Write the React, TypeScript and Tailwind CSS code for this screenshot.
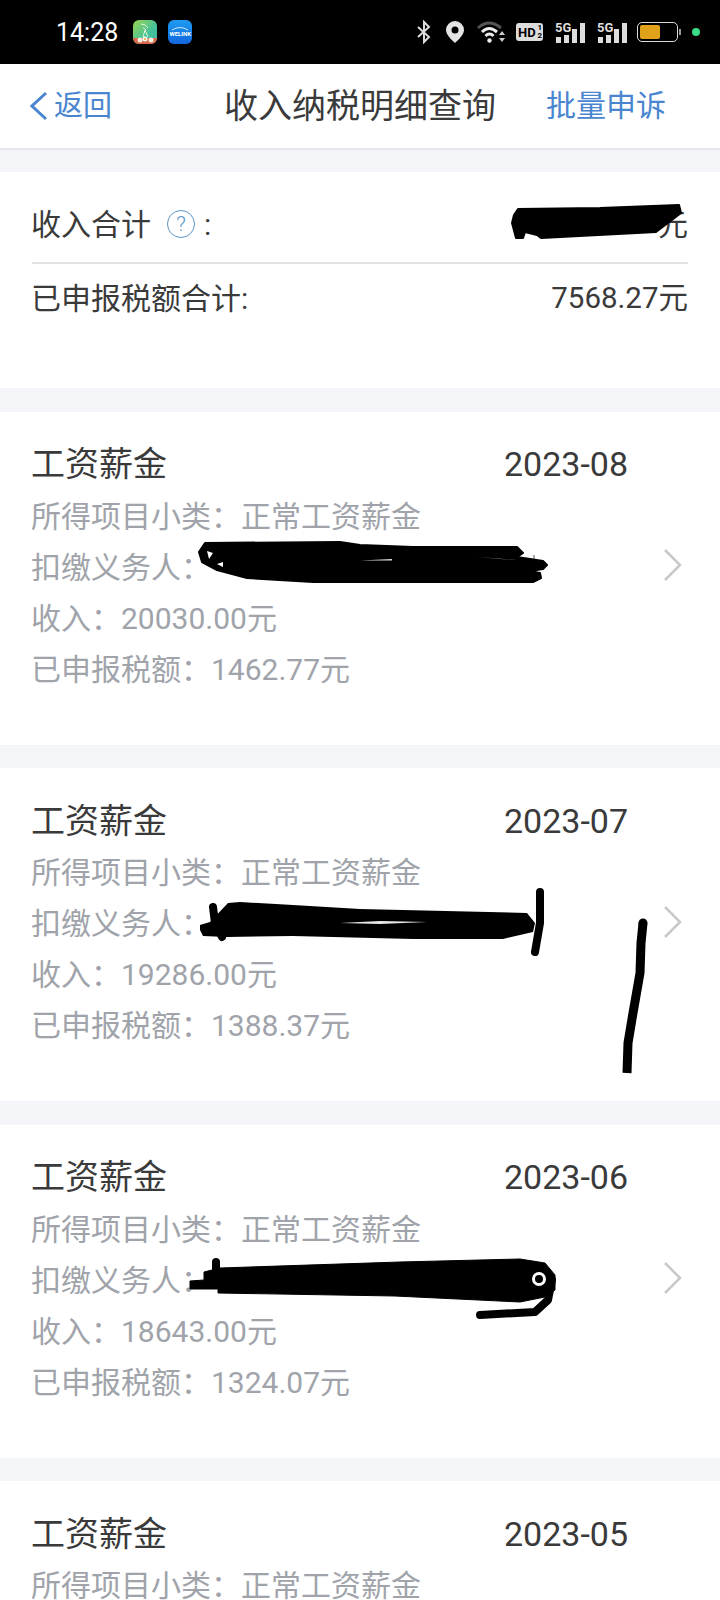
import { ReactNode } from 'react';

const records: { month: string; income: string; tax: string; scribble?: ReactNode }[] = [
  {
    month: '2023-08',
    income: '20030.00元',
    tax: '1462.77元',
    scribble: (
      <>
        <path d="M534 143 L534 158" stroke="#aaa" strokeWidth="2" />
        <path
          d="M199 140 L205 131 L340 130 L360 133 L413 135 L517 135 L523 141 L517 145 L543 149 L547 153 L543 157 L530 159 L540 161 L541 166 L533 170 L420 170 L313 170 L247 166 L217 158 L202 150 Z"
          fill="#000"
          stroke="#000"
          strokeWidth="2"
          strokeLinejoin="round"
        />
        <path d="M207 139 L213 141 L209 147 Z M217 152 L223 150 L223 155 Z" fill="#fff" />
        <path d="M360 148.500 L392 147 L392 148.500 Z M478 145 L517 148 L500 147 Z" fill="#ddd" />
      </>
    ),
  },
  {
    month: '2023-07',
    income: '19286.00元',
    tax: '1388.37元',
    scribble: (
      <>
        <path
          d="M200 157 L210 154 L228 135 L240 134 L293 137 L360 141 L527 145 L535 155 L533 164 L503 171 L413 171 L293 168 L227 169 L203 168 L200 162 Z"
          fill="#000"
        />
        <path d="M340 155 L380 153 L427 154 L380 156 Z" fill="#e8e8e8" />
        <path d="M540 124 L540 155 L535 184 M213 139 L215 155 L222 169" fill="none" stroke="#000" strokeWidth="8" strokeLinecap="round" strokeLinejoin="round" />
        <circle cx="643" cy="155" r="4.500" fill="#000" />
        <path d="M643 155 L641 175 L640 205 L633 245 L628 275 L627 305" fill="none" stroke="#000" strokeWidth="9" strokeLinejoin="round" />
      </>
    ),
  },
  {
    month: '2023-06',
    income: '18643.00元',
    tax: '1324.07元',
    scribble: (
      <>
        <path
          d="M190 164 L190 156 L204 155 L204 147 L220 143 L400 137 L520 134 L545 138 L555 150 L555 165 L545 172 L520 177 L395 171 L218 168 L218 164 Z"
          fill="#000"
          stroke="#000"
          strokeWidth="1"
          strokeLinejoin="round"
        />
        <path d="M480 190 L535 187 L548 175 L552 155" fill="none" stroke="#000" strokeWidth="8" strokeLinecap="round" strokeLinejoin="round" />
        <path d="M216 137 L216 146" fill="none" stroke="#000" strokeWidth="8" strokeLinecap="round" />
        <circle cx="539" cy="154" r="7" fill="#fff" />
        <circle cx="539" cy="154" r="4" fill="#000" />
      </>
    ),
  },
  { month: '2023-05', income: '', tax: '' },
];

function SignalIcon({ className }: { className: string }) {
  return (
    <div className={`relative h-[21px] w-[30px] ${className}`}>
      <span className="absolute left-0 top-0 text-[13px] font-bold leading-[11px] text-[#ddd]">5G</span>
      <div className="absolute bottom-0 left-[1px] flex items-end gap-[3px]">
        <div className="h-[6px] w-[5px] bg-[#ddd]" />
        <div className="h-[8px] w-[5px] bg-[#ddd]" />
        <div className="h-[14px] w-[5px] bg-[#ddd]" />
        <div className="h-[20px] w-[5px] bg-[#ddd]" />
      </div>
    </div>
  );
}

function StatusBar() {
  return (
    <div className="flex h-[64px] items-center justify-between bg-black pl-[56px] pr-[20px]">
      <div className="flex items-center">
        <span className="text-[25px] leading-none text-white">14:28</span>
        <svg className="ml-[15px]" width="24" height="24" viewBox="0 0 24 24">
          <defs>
            <linearGradient id="appGreen" x1="0" y1="0" x2="1" y2="1">
              <stop offset="0" stopColor="#9bd44e" />
              <stop offset="0.6" stopColor="#45c29a" />
              <stop offset="1" stopColor="#3fb7a8" />
            </linearGradient>
          </defs>
          <rect width="24" height="24" rx="6" fill="url(#appGreen)" />
          <path d="M0 18 H24 V18 A6 6 0 0 1 18 24 H6 A6 6 0 0 1 0 18 Z" fill="#d9674a" />
          <path d="M8 4 Q13 4 15 8 M10 8 Q12 8 13 10 M12 10 L10 17 M12 10 L15 17" fill="none" stroke="#e6f5dc" strokeWidth="1" />
          <circle cx="7" cy="20" r="2.500" fill="#f7efe0" />
          <circle cx="12" cy="19" r="2.500" fill="#fff" />
          <circle cx="18" cy="20" r="2.500" fill="#f7efe0" />
          <circle cx="12" cy="19" r="1" fill="#e6a92a" />
        </svg>
        <div className="relative ml-[11px] flex h-[24px] w-[24px] items-center justify-center rounded-[6px] bg-gradient-to-b from-[#1f9cf0] to-[#1565e0]">
          <svg className="absolute left-[3px] top-[6px]" width="18" height="5" viewBox="0 0 18 5" fill="none" stroke="#cfe8ff" strokeWidth="1">
            <path d="M1 4 Q9 -1 17 4" />
          </svg>
          <span className="mt-[3px] text-[6px] font-bold leading-none text-white">WELINK</span>
        </div>
      </div>
      <div className="flex items-center">
        <svg width="14" height="24" viewBox="0 0 14 24" fill="none" stroke="#ddd" strokeWidth="2">
          <path d="M1 7 L12 17 L7 22 L7 2 L12 7 L1 17" />
        </svg>
        <svg className="ml-[14px]" width="20" height="24" viewBox="0 0 20 24">
          <path d="M10 1 A9 9 0 0 1 19 10 C19 15 13 20 10 23 C7 20 1 15 1 10 A9 9 0 0 1 10 1 Z" fill="#e4e4e4" />
          <circle cx="10" cy="10" r="3.500" fill="#000" />
        </svg>
        <svg className="ml-[12px]" width="30" height="24" viewBox="0 0 30 24" fill="none">
          <path d="M1 8 Q12 -2 24 8" stroke="#555" strokeWidth="3" />
          <path d="M5 12 Q12 5 20 12" stroke="#eee" strokeWidth="3" />
          <path d="M8.500 16 Q12.500 12 16.500 16" stroke="#eee" strokeWidth="3" />
          <circle cx="12.500" cy="20.500" r="2.200" fill="#eee" />
          <path d="M22 15 L25 11 L28 15 Z M22 18 L28 18 L25 22 Z" fill="#ccc" />
        </svg>
        <div className="ml-[9px] flex h-[18px] w-[27px] items-center justify-between rounded-[3px] bg-[#ddd] pl-[2px] pr-[1px]">
          <span className="text-[13px] font-bold leading-none text-black">HD</span>
          <div className="flex flex-col items-center text-[8px] font-bold leading-[8px] text-black">
            <span>1</span>
            <span>2</span>
          </div>
        </div>
        <SignalIcon className="ml-[12px]" />
        <SignalIcon className="ml-[12px]" />
        <div className="ml-[10px] flex items-center">
          <div className="h-[20px] w-[41px] rounded-[5px] border border-[#ddd] p-[2px]">
            <div className="h-full w-[20px] rounded-[2px] bg-[#e0a11b]" />
          </div>
          <div className="ml-[1px] h-[6px] w-[2px] bg-[#999]" />
        </div>
        <div className="ml-[11px] h-[8px] w-[8px] rounded-full bg-[#3ddc84]" />
      </div>
    </div>
  );
}

function NavBar() {
  return (
    <div className="grid h-[86px] grid-cols-[1fr_auto_1fr] items-center border-b-2 border-[#e4e6ea] bg-white">
      <div className="flex items-center pl-[30px] text-[29px] text-[#4a86d0]">
        <svg width="18" height="30" viewBox="0 0 18 30" fill="none" stroke="#4a86d0" strokeWidth="3">
          <path d="M16 2 L2 15 L16 28" />
        </svg>
        <span className="ml-[6px] leading-none">返回</span>
      </div>
      <div className="text-[34px] leading-none text-[#3a3a3a]">收入纳税明细查询</div>
      <div className="pr-[54px] text-right text-[30px] leading-none text-[#4a86d0]">批量申诉</div>
    </div>
  );
}

function Summary() {
  return (
    <div className="relative mt-[22px] bg-white pb-[56px] pl-[31px] pr-[32px] pt-[26px] text-[30px] text-[#3a3a3a]">
      <div className="mb-[12px] flex h-[52px] items-center justify-between">
        <div className="flex items-center">
          <span>收入合计</span>
          <div className="ml-[16px] flex h-[28px] w-[28px] items-center justify-center rounded-full border border-[#5a94c8] text-[21px] font-light leading-none text-[#5a94c8]">
            ?
          </div>
          <span className="ml-[9px]">:</span>
        </div>
        <span>元</span>
      </div>
      <div className="ml-[1px] h-[2px] bg-[#e2e3e6]" />
      <div className="flex h-[68px] items-center justify-between">
        <span>已申报税额合计:</span>
        <span className="text-[29.5px]">7568.27元</span>
      </div>
      <svg className="absolute inset-0 h-full w-full" fill="none">
        <path
          d="M518 37 L600 36 L679 33 L681 41 L656 60 L541 66 L537 63 L525 60 L523 66 L516 66 L512 51 L514 43 Z"
          fill="#000"
          stroke="#000"
          strokeWidth="2"
          strokeLinejoin="round"
        />
      </svg>
    </div>
  );
}

function RecordCard({ month, income, tax, scribble }: (typeof records)[number]) {
  return (
    <div className="relative mt-[23.5px] bg-white pb-[50px] pl-[31px] pt-[28px] text-[30px] leading-[51px] text-[#a0a4aa]">
      <div className="mb-[1px] flex h-[50px] items-center justify-between pr-[92px] text-[34px] text-[#3a3a3a]">
        <span>工资薪金</span>
        <span>{month}</span>
      </div>
      <div>所得项目小类：正常工资薪金</div>
      <div className="flex items-center justify-between pr-[38px]">
        <span>扣缴义务人：</span>
        <svg className="mb-[4px]" width="18" height="32" viewBox="0 0 18 32" fill="none" stroke="#c8c8c8" strokeWidth="2.5">
          <path d="M1 1 L16 16 L1 31" />
        </svg>
      </div>
      <div>收入：{income}</div>
      <div>已申报税额：{tax}</div>
      {scribble && (
        <svg className="absolute inset-0 h-full w-full" fill="none">
          {scribble}
        </svg>
      )}
    </div>
  );
}

export default function App() {
  return (
    <div className="h-[1600px] overflow-hidden bg-[#f3f5f9] font-['Roboto','Noto_Sans_CJK_SC',sans-serif]">
      <StatusBar />
      <NavBar />
      <Summary />
      {records.map((r) => (
        <RecordCard key={r.month} {...r} />
      ))}
    </div>
  );
}
